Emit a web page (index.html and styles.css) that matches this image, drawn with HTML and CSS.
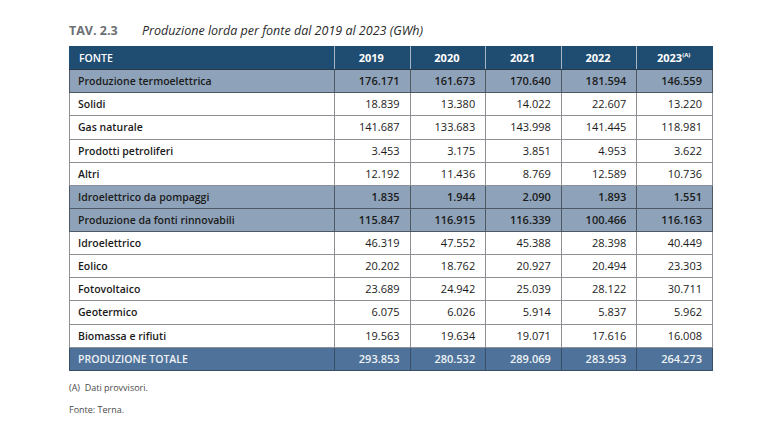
FILE: index.html
```html
<!DOCTYPE html>
<html lang="it">
<head>
<meta charset="utf-8">
<link rel="stylesheet" href="styles.css">
</head>
<body>
<div class="page">
  <div class="title"><span class="tav">TAV. 2.3</span><span class="caption">Produzione lorda per fonte dal 2019 al 2023 (GWh)</span></div>
  <table class="data">
    <colgroup><col class="c-label"><col class="c-num"><col class="c-num"><col class="c-num"><col class="c-num"><col class="c-num"></colgroup>
    <thead>
      <tr class="head"><th class="lbl">FONTE</th><th>2019</th><th>2020</th><th>2021</th><th>2022</th><th>2023<sup>(A)</sup></th></tr>
    </thead>
    <tbody>
      <tr class="hl"><td class="lbl">Produzione termoelettrica</td><td>176.171</td><td>161.673</td><td>170.640</td><td>181.594</td><td>146.559</td></tr>
      <tr><td class="lbl">Solidi</td><td>18.839</td><td>13.380</td><td>14.022</td><td>22.607</td><td>13.220</td></tr>
      <tr><td class="lbl">Gas naturale</td><td>141.687</td><td>133.683</td><td>143.998</td><td>141.445</td><td>118.981</td></tr>
      <tr><td class="lbl">Prodotti petroliferi</td><td>3.453</td><td>3.175</td><td>3.851</td><td>4.953</td><td>3.622</td></tr>
      <tr><td class="lbl">Altri</td><td>12.192</td><td>11.436</td><td>8.769</td><td>12.589</td><td>10.736</td></tr>
      <tr class="hl"><td class="lbl">Idroelettrico da pompaggi</td><td>1.835</td><td>1.944</td><td>2.090</td><td>1.893</td><td>1.551</td></tr>
      <tr class="hl"><td class="lbl">Produzione da fonti rinnovabili</td><td>115.847</td><td>116.915</td><td>116.339</td><td>100.466</td><td>116.163</td></tr>
      <tr><td class="lbl">Idroelettrico</td><td>46.319</td><td>47.552</td><td>45.388</td><td>28.398</td><td>40.449</td></tr>
      <tr><td class="lbl">Eolico</td><td>20.202</td><td>18.762</td><td>20.927</td><td>20.494</td><td>23.303</td></tr>
      <tr><td class="lbl">Fotovoltaico</td><td>23.689</td><td>24.942</td><td>25.039</td><td>28.122</td><td>30.711</td></tr>
      <tr><td class="lbl">Geotermico</td><td>6.075</td><td>6.026</td><td>5.914</td><td>5.837</td><td>5.962</td></tr>
      <tr><td class="lbl">Biomassa e rifiuti</td><td>19.563</td><td>19.634</td><td>19.071</td><td>17.616</td><td>16.008</td></tr>
      <tr class="total"><td class="lbl">PRODUZIONE TOTALE</td><td>293.853</td><td>280.532</td><td>289.069</td><td>283.953</td><td>264.273</td></tr>
    </tbody>
  </table>
  <p class="note">(A)&nbsp; Dati provvisori.</p>
  <p class="note">Fonte: Terna.</p>
</div>
</body>
</html>
```

FILE: styles.css
```css
html, body {
  margin: 0;
  padding: 0;
  background: #ffffff;
}
.page {
  padding: 22px 0 0 69px;
  font-family: "Open Sans", "Liberation Sans", sans-serif;
  color: #1b1b1b;
}
.title {
  display: flex;
  align-items: baseline;
  height: 20px;
  margin-bottom: 4px;
}
.tav {
  font-weight: 700;
  font-size: 12.5px;
  color: #6b6f73;
  width: 73px;
}
.caption {
  font-style: italic;
  font-size: 12.5px;
  color: #2a2a2a;
}
.data {
  border-collapse: collapse;
  width: 643px;
  table-layout: fixed;
  font-size: 11px;
  border: 1px solid #4a4f55;
}
.c-label { width: 265px; }
.c-num { width: 75.6px; }
.data tr { height: 23.14px; }
.data th, .data td {
  padding: 0 10px 0 8px;
  text-align: right;
  border: 1px solid #8c8f93;
  white-space: nowrap;
  line-height: 14px;
}
.data td.lbl, .data th.lbl {
  text-align: left;
  font-weight: 600;
  font-size: 10.5px;
}
.data td { font-weight: 400; }
.data th {
  background: #1f4c71;
  color: #ffffff;
  font-weight: 700;
  text-align: center;
  border-color: #a9b6c3;
  border-top-color: #1f4c71;
  border-bottom-color: #2b3a49;
}
.data th.lbl { padding-left: 9px; }
.data th:first-child { border-left-color: #1f4c71; }
.data th:last-child { border-right-color: #1f4c71; }
.data th sup {
  font-size: 6px;
  vertical-align: 5px;
  line-height: 0;
}
.data tr.hl td {
  background: #8ea3ba;
  font-weight: 600;
  border-color: #4d5863;
}
.data tr.total td {
  background: #4f729a;
  color: #eef2f6;
  font-weight: 600;
  border-color: #3a4f66;
}
.note {
  margin: 0;
  font-size: 9px;
  color: #4a4a4a;
  line-height: 12px;
}
.data + .note { margin-top: 11px; }
.note + .note { margin-top: 10px; }
```
